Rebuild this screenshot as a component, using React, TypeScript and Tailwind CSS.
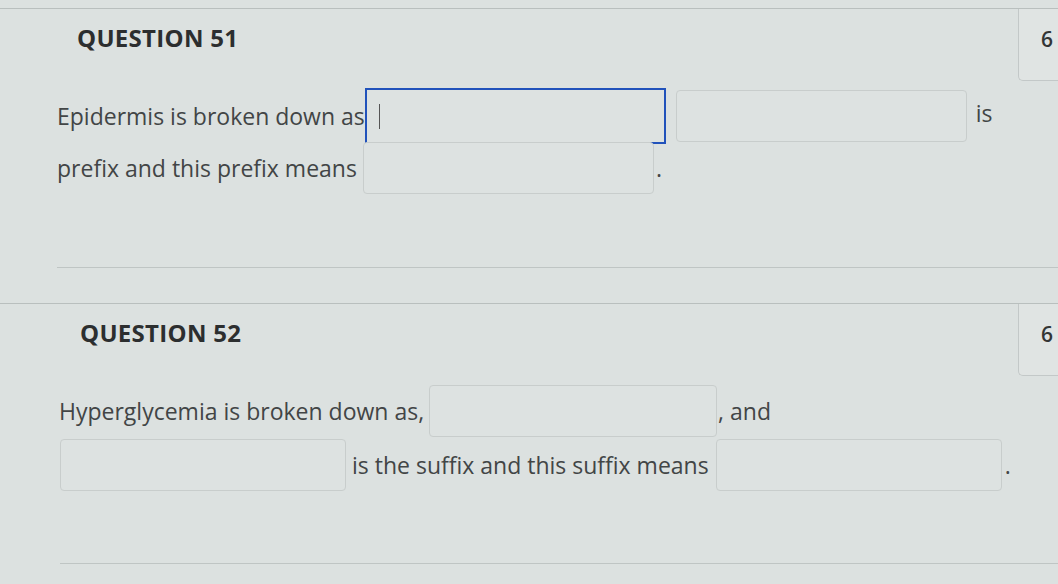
import * as React from "react";

const Blank = ({ className = "" }: { className?: string }) => (
  <span
    className={`block shrink-0 rounded-[4px] border border-[#c8cdcc] bg-[#dde2e1] ${className}`}
  />
);

const Points = () => (
  <div className="h-[72px] w-[40px] shrink-0 rounded-bl-[5px] border-b border-l border-[#c3c8c8] bg-[#e0e4e3] pl-[22px] pt-[20px] text-[21px] font-semibold leading-none text-[#333535]">
    6
  </div>
);

const Heading = ({ children }: { children: React.ReactNode }) => (
  <h2 className="pt-[14px] text-[24px] font-bold leading-[30px] tracking-[0.3px] text-[#2c2e2f]">
    {children}
  </h2>
);

export default function App() {
  return (
    <div className="min-h-[584px] bg-[#dce1e0] pt-[8px] font-['Open_Sans',sans-serif] text-[23px] text-[#424546]">
      {/* question 51 */}
      <section className="border-t border-[#b9bfbe]">
        <div className="flex justify-between">
          <div className="pl-[77px]">
            <Heading>QUESTION 51</Heading>
          </div>
          <Points />
        </div>

        <div className="mt-[7px] flex h-[56px] items-center pl-[57px]">
          <span>Epidermis is broken down as,</span>
          <span className="relative ml-[-6px] block h-[56px] w-[301px] shrink-0 border-2 border-[#2152bb] bg-[#dde2e1]">
            <span className="absolute left-[12px] top-[14px] h-[25px] w-px bg-[#555]" />
          </span>
          <Blank className="ml-[10px] h-[52px] w-[291px]" />
          <span className="ml-[9px] pb-[6px]">is</span>
        </div>

        <div className="relative z-10 -mt-[2px] flex h-[52px] items-center pl-[57px]">
          <span>prefix and this prefix means</span>
          <Blank className="ml-[6px] h-[52px] w-[291px]" />
          <span className="ml-[2px]">.</span>
        </div>

        <div className="ml-[57px] mt-[73px] border-t border-[#bfc5c4]" />
      </section>

      {/* question 52 */}
      <section className="mt-[35px] border-t border-[#b9bfbe]">
        <div className="flex justify-between">
          <div className="pl-[80px]">
            <Heading>QUESTION 52</Heading>
          </div>
          <Points />
        </div>

        <div className="mt-[9px] flex h-[52px] items-center pl-[59px]">
          <span>Hyperglycemia is broken down as,</span>
          <Blank className="ml-[5px] h-[52px] w-[288px]" />
          <span className="ml-[1px]">, and</span>
        </div>

        <div className="mt-[2px] flex h-[52px] items-center pl-[60px]">
          <Blank className="h-[52px] w-[286px]" />
          <span className="ml-[6px]">is the suffix and this suffix means</span>
          <Blank className="ml-[7px] h-[52px] w-[286px]" />
          <span className="ml-[3px]">.</span>
        </div>

        <div className="ml-[60px] mt-[72px] border-t border-[#bfc5c4]" />
      </section>
    </div>
  );
}
